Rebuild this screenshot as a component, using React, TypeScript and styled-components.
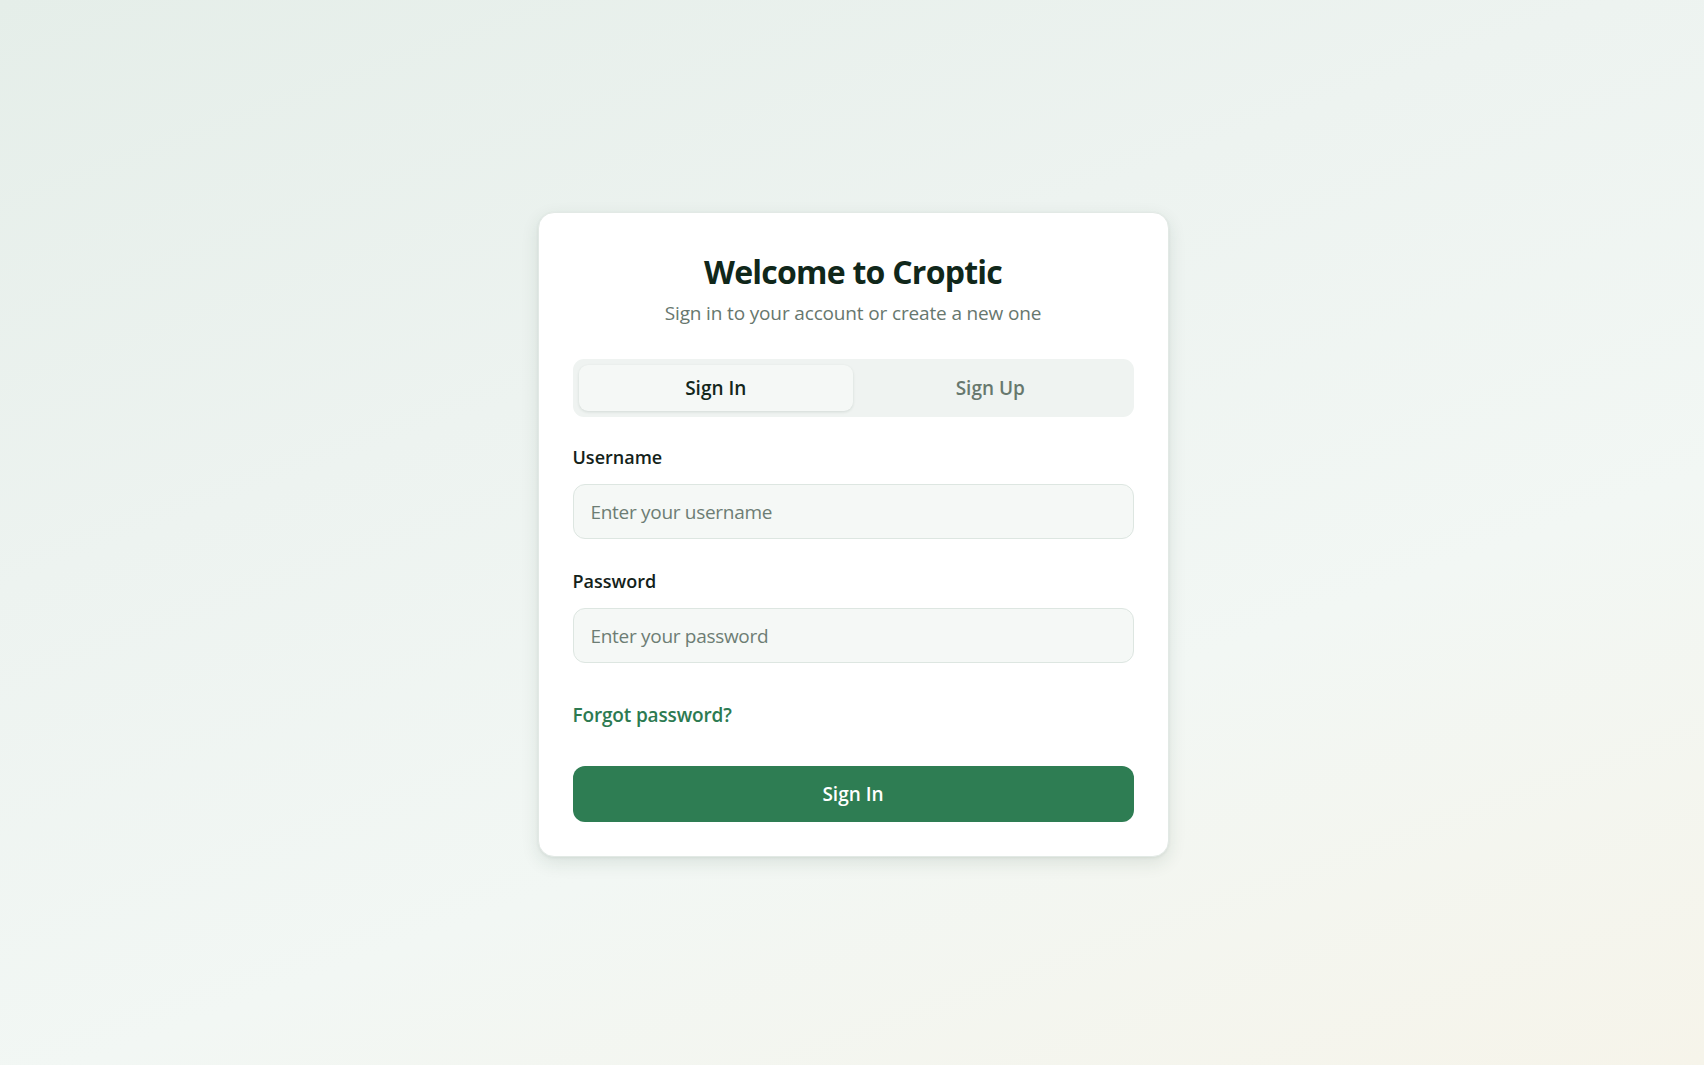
import React, { useState } from "react";
import styled, { createGlobalStyle } from "styled-components";

const GlobalStyle = createGlobalStyle`
  * { box-sizing: border-box; }
  html, body { margin: 0; padding: 0; height: 100%; }
  body {
    font-family: "Open Sans", "Noto Sans", sans-serif;
    -webkit-font-smoothing: antialiased;
  }
  #root { min-height: 100vh; }
`;

const Page = styled.div`
  min-height: 100vh;
  display: flex;
  align-items: center;
  justify-content: center;
  padding-top: 4px;
  padding-left: 2px;
  background: linear-gradient(160deg, #e5eee9 0%, #edf3f0 35%, #f2f7f4 65%, #f6f4ea 100%);
`;

const Card = styled.div`
  width: 631px;
  display: flex;
  flex-direction: column;
  padding: 34px;
  background: #ffffff;
  border: 1px solid #e2e9e5;
  border-radius: 16px;
  box-shadow: 0 6px 18px rgba(30, 60, 45, 0.11), 0 1px 3px rgba(30, 60, 45, 0.07);
`;

const Header = styled.div`
  display: flex;
  flex-direction: column;
  align-items: center;
  padding-top: 3px;
`;

const Title = styled.h1`
  margin: 0;
  font-size: 32px;
  line-height: 43px;
  font-weight: 700;
  letter-spacing: -0.75px;
  color: #10271a;
`;

const Subtitle = styled.p`
  margin: 6px 0 0;
  font-size: 19px;
  line-height: 28px;
  letter-spacing: -0.15px;
  color: #67776e;
`;

const Tabs = styled.div`
  margin-top: 32px;
  display: grid;
  grid-template-columns: 1fr 1fr;
  padding: 6px;
  height: 58px;
  border-radius: 11px;
  background: #eff3f1;
`;

const Tab = styled.button<{ $active?: boolean }>`
  border: none;
  border-radius: 9px;
  font-family: inherit;
  font-size: 19px;
  font-weight: 600;
  cursor: pointer;
  background: ${p => (p.$active ? "#f5f8f6" : "transparent")};
  color: ${p => (p.$active ? "#13261b" : "#67786e")};
  box-shadow: ${p => (p.$active ? "0 1px 3px rgba(20, 50, 35, 0.12)" : "none")};
`;

const Form = styled.form`
  display: flex;
  flex-direction: column;
  margin-top: 27px;
`;

const Field = styled.div<{ $first?: boolean }>`
  display: flex;
  flex-direction: column;
  gap: 14px;
  margin-top: ${p => (p.$first ? "0" : "29px")};
`;

const Label = styled.label`
  font-size: 18px;
  line-height: 26px;
  font-weight: 600;
  color: #13221a;
`;

const Input = styled.input`
  height: 55px;
  width: 100%;
  padding: 0 17px;
  border: 1px solid #dde6e1;
  border-radius: 12px;
  background: #f5f8f6;
  font-family: inherit;
  font-size: 19px;
  letter-spacing: -0.3px;
  color: #13221a;
  outline: none;

  &::placeholder {
    color: #6d7d74;
  }
`;

const ForgotLink = styled.a`
  align-self: flex-start;
  margin-top: 39px;
  font-size: 19px;
  line-height: 26px;
  font-weight: 600;
  letter-spacing: -0.15px;
  color: #2d7a51;
  text-decoration: none;
  cursor: pointer;
`;

const SubmitButton = styled.button`
  margin-top: 38px;
  height: 56px;
  width: 100%;
  border: none;
  border-radius: 12px;
  background: #2e7d53;
  color: #ffffff;
  font-family: inherit;
  font-size: 19px;
  font-weight: 600;
  cursor: pointer;
`;

export default function App() {
  const [tab, setTab] = useState<"in" | "up">("in");

  return (
    <>
      <GlobalStyle />
      <Page>
        <Card>
          <Header>
            <Title>Welcome to Croptic</Title>
            <Subtitle>Sign in to your account or create a new one</Subtitle>
          </Header>
          <Tabs>
            <Tab $active={tab === "in"} onClick={() => setTab("in")}>Sign In</Tab>
            <Tab $active={tab === "up"} onClick={() => setTab("up")}>Sign Up</Tab>
          </Tabs>
          <Form onSubmit={e => e.preventDefault()}>
            <Field $first>
              <Label htmlFor="username">Username</Label>
              <Input id="username" placeholder="Enter your username" />
            </Field>
            <Field>
              <Label htmlFor="password">Password</Label>
              <Input id="password" type="password" placeholder="Enter your password" />
            </Field>
            <ForgotLink>Forgot password?</ForgotLink>
            <SubmitButton type="submit">Sign In</SubmitButton>
          </Form>
        </Card>
      </Page>
    </>
  );
}
